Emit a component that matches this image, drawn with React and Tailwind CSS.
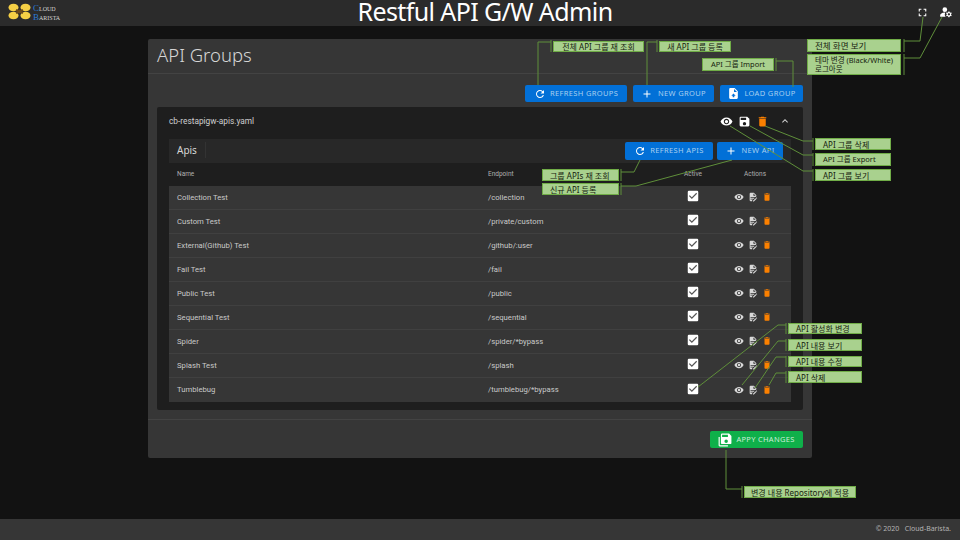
import { MdAdd, MdCheckBox, MdDelete, MdExpandLess, MdFullscreen, MdManageAccounts, MdRefresh, MdSave, MdVisibility } from "react-icons/md";

const apis = [
  ["Collection Test", "/collection"],
  ["Custom Test", "/private/custom"],
  ["External(Github) Test", "/github/:user"],
  ["Fail Test", "/fail"],
  ["Public Test", "/public"],
  ["Sequential Test", "/sequential"],
  ["Spider", "/spider/*bypass"],
  ["Splash Test", "/splash"],
  ["Tumblebug", "/tumblebug/*bypass"],
];

const notes = [
  { text: "전체 API 그룹 재 조회", className: "left-[553px] top-[41px] w-[91px] h-[11px] justify-center text-[8px]" },
  { text: "새 API 그룹 등록", className: "left-[659px] top-[41px] w-[72px] h-[11px] justify-center text-[8px]" },
  { text: "API 그룹 Import", className: "left-[702px] top-[58px] w-[72px] h-[13px] justify-center text-[7.5px]" },
  { text: "전체 화면 보기", className: "left-[807px] top-[39px] w-[94px] h-[13px] justify-start pl-[7px] text-[8.5px]" },
  { text: "테마 변경 (Black/White)\n로그아웃", className: "left-[807px] top-[54px] w-[94px] h-[21px] justify-start pl-[7px] text-[7.5px]" },
  { text: "API 그룹 삭제", className: "left-[815px] top-[138px] w-[76px] h-[12px] justify-start pl-[7px] text-[8px]" },
  { text: "API 그룹 Export", className: "left-[815px] top-[153px] w-[76px] h-[13px] justify-start pl-[7px] text-[7.5px]" },
  { text: "API 그룹 보기", className: "left-[815px] top-[169px] w-[76px] h-[12px] justify-start pl-[7px] text-[8px]" },
  { text: "그룹 APIs 재 조회", className: "left-[542px] top-[169px] w-[77px] h-[12px] justify-start pl-[7px] text-[8px]" },
  { text: "신규 API 등록", className: "left-[542px] top-[183px] w-[77px] h-[12px] justify-start pl-[7px] text-[8px]" },
  { text: "API 활성화 변경", className: "left-[788px] top-[323px] w-[74px] h-[11px] justify-start pl-[7px] text-[8px]" },
  { text: "API 내용 보기", className: "left-[788px] top-[339px] w-[74px] h-[12px] justify-start pl-[7px] text-[8px]" },
  { text: "API 내용 수정", className: "left-[788px] top-[356px] w-[74px] h-[11px] justify-start pl-[7px] text-[8px]" },
  { text: "API 삭제", className: "left-[788px] top-[371px] w-[74px] h-[12px] justify-start pl-[7px] text-[8px]" },
  { text: "변경 내용 Repository에 적용", className: "left-[744px] top-[486px] w-[112px] h-[12px] justify-center text-[8px]" },
];

const lines = [
  "538,85 538,42 551,42",
  "647,85 647,42 657,42",
  "776,61 793,61 793,87",
  "923,17 920,41 904,41",
  "942,17 920,58 904,58",
  "765,126 803,141 813,141",
  "750,126 803,155 813,155",
  "730,126 803,171 813,171",
  "640,160 634,172 621,172",
  "732,160 636,186 621,186",
  "698,387 778,325 786,325",
  "742,385 778,341 786,341",
  "755,388 776,357 786,357",
  "769,385 776,373 786,373",
  "726,450 726,489 742,489",
];

const ticks = [
  "551,40 551,52", "657,40 657,52", "776,58 776,71", "904,39 904,52", "904,54 904,75",
  "813,138 813,150", "813,153 813,166", "813,169 813,181", "621,169 621,181", "621,183 621,195",
  "786,323 786,334", "786,339 786,351", "786,356 786,367", "786,371 786,383", "742,486 742,498",
];

function FileEdit({ size = 10, className }) {
  return (
    <svg width={size} height={size} viewBox="0 0 24 24" fill="currentColor" className={className}>
      <path d="M6,2C4.89,2 4,2.89 4,4V20A2,2 0 0,0 6,22H10V20.09L12.09,18H6V16H14.09L16.09,14H6V12H18.09L20,10.09V8L14,2H6M13,3.5L18.5,9H13V3.5M20.15,13C20,13 19.86,13.05 19.75,13.16L18.73,14.18L20.82,16.26L21.84,15.25C22.05,15.03 22.05,14.67 21.84,14.46L20.54,13.16C20.43,13.05 20.29,13 20.15,13M18.14,14.77L12,20.92V23H14.08L20.23,16.85L18.14,14.77Z" />
    </svg>
  );
}

function FileUpload({ size = 13 }) {
  return (
    <svg width={size} height={size} viewBox="0 0 24 24" fill="currentColor">
      <path d="M14,2H6A2,2 0 0,0 4,4V20A2,2 0 0,0 6,22H18A2,2 0 0,0 20,20V8L14,2M13.5,16V19H10.5V16H8L12,12L16,16H13.5M13,9V3.5L18.5,9H13Z" />
    </svg>
  );
}

function SaveAll({ size = 14 }) {
  return (
    <svg width={size} height={size} viewBox="0 0 24 24" fill="currentColor">
      <path d="M17,7V3H7V7H17M14,17A3,3 0 0,0 17,14A3,3 0 0,0 14,11A3,3 0 0,0 11,14A3,3 0 0,0 14,17M19,1L23,5V17A2,2 0 0,1 21,19H7C5.89,19 5,18.1 5,17V3A2,2 0 0,1 7,1H19M1,7H3V21H17V23H3A2,2 0 0,1 1,21V7Z" />
    </svg>
  );
}

function Logo() {
  return (
    <svg width="23" height="17" viewBox="0 0 23 17">
      <ellipse cx="5.5" cy="4.5" rx="5" ry="3.8" fill="#f5cf45" />
      <ellipse cx="17.5" cy="4.5" rx="5" ry="3.8" fill="#f5cf45" />
      <ellipse cx="5.5" cy="12.5" rx="5" ry="3.8" fill="#f5cf45" />
      <ellipse cx="17.5" cy="12.5" rx="5" ry="3.8" fill="#f5cf45" />
      <path d="M8 7 L15 10 M15 7 L8 10" stroke="#6b4a1c" strokeWidth="2.4" />
      <circle cx="11.5" cy="8.5" r="2" fill="#6b4a1c" />
    </svg>
  );
}

function BlueButton({ icon, label, className }) {
  return (
    <div className={`flex items-center justify-center rounded-[2px] bg-[#0270d7] text-[#a8cfef] ${className}`}>
      <span className="text-white">{icon}</span>
      <span className="text-[7.5px] uppercase tracking-[0.35px] whitespace-nowrap">{label}</span>
    </div>
  );
}

function ApiRow({ name, endpoint }) {
  return (
    <div className="grid h-6 grid-cols-[311px_180px_66px_1fr] items-center border-b border-[#404040] bg-[#363636] font-['Roboto',sans-serif] text-[7.7px] text-[#c9c9c9] last:border-b-0">
      <div className="pl-2">{name}</div>
      <div className="pl-2">{endpoint}</div>
      <div className="flex justify-center pb-[3px]">
        <span className="relative flex h-[14px] w-[14px] items-center justify-center">
          <span className="absolute h-[8px] w-[8px] bg-[#555]" />
          <MdCheckBox size={14} className="relative text-white" />
        </span>
      </div>
      <div className="flex items-center justify-center gap-1 pb-[1px] pr-[11px]">
        <MdVisibility size={10} className="text-[#d8d8d8]" />
        <FileEdit className="text-[#d8d8d8]" />
        <MdDelete size={10} className="text-[#fb8000]" />
      </div>
    </div>
  );
}

export default function App() {
  return (
    <div className="relative flex h-[540px] w-[960px] flex-col overflow-hidden bg-[#121212] font-['Noto_Sans','Noto_Sans_CJK_KR',sans-serif]">
      <header className="relative flex h-[26px] shrink-0 items-center justify-center bg-[#2b2b2b] pl-[10px]">
        <div className="absolute left-2 top-[3px] flex items-start gap-[2px]">
          <Logo />
          <div className="pt-[1px] font-['Liberation_Serif',serif] text-[9px] leading-[9px] text-[#d5d5d5] [font-variant:small-caps]">
            <div><span className="text-[#2a7ad8]">C</span>loud</div>
            <div><span className="text-[#2a7ad8]">B</span>arista</div>
          </div>
        </div>
        <h1 className="pb-[3px] text-[25px] leading-[23px] tracking-[-0.6px] whitespace-nowrap text-white">Restful API G/W Admin</h1>
        <div className="absolute right-[7px] top-[5px] flex items-center gap-[10px] text-white">
          <MdFullscreen size={13} />
          <MdManageAccounts size={14} />
        </div>
      </header>

      <main className="flex-1">
        <section className="mx-auto mt-[13px] h-[419px] w-[664px] rounded-[2px] bg-[#363636]">
          <div className="flex h-[35px] items-center border-b border-[#434343] pb-[2px] pl-[9px] text-[18.5px] font-light text-[#d6d6d6]">
            API Groups
          </div>
          <div className="flex justify-end gap-[6px] pr-[9px] pt-[11px]">
            <BlueButton icon={<MdRefresh size={12} />} label="Refresh Groups" className="h-[17px] w-[102px] gap-[4px]" />
            <BlueButton icon={<MdAdd size={12} />} label="New Group" className="h-[17px] w-[81px] gap-[5px]" />
            <BlueButton icon={<FileUpload />} label="Load Group" className="h-[17px] w-[83px] gap-[4px]" />
          </div>

          <div className="mx-[9px] mt-[5px] h-[303px] rounded-[2px] bg-[#1e1e1e] px-3 pt-[1px]">
            <div className="flex h-[26px] items-center justify-between">
              <span className="font-['Roboto',sans-serif] text-[8.3px] text-[#cfcfcf]">cb-restapigw-apis.yaml</span>
              <div className="flex items-center gap-[5px] text-white">
                <MdVisibility size={13} />
                <MdSave size={13} />
                <MdDelete size={13} className="text-[#fb8000]" />
                <MdExpandLess size={12} className="ml-[5px] text-[#d0d0d0]" />
              </div>
            </div>

            <div className="mt-[5px] rounded-[2px] bg-[#1e1e1e]">
              <div className="flex h-6 items-center justify-between bg-[#282828] px-2">
                <span className="mb-[2px] border-r border-[#333] pr-2 text-[10px] leading-[16px] text-[#d6d6d6]">Apis</span>
                <div className="flex items-center gap-1">
                  <BlueButton icon={<MdRefresh size={12} />} label="Refresh APIs" className="h-[18px] w-[88px] gap-[4px]" />
                  <BlueButton icon={<MdAdd size={12} />} label="New API" className="h-[18px] w-[66px] gap-[4px]" />
                </div>
              </div>
              <div className="grid h-[23px] grid-cols-[311px_180px_66px_1fr] items-center font-['Roboto',sans-serif] text-[6.5px] text-[#b0b0b0]">
                <div className="pl-2">Name</div>
                <div className="pl-2">Endpoint</div>
                <div className="text-center">Active</div>
                <div className="pr-[7px] text-center">Actions</div>
              </div>
              {apis.map(([name, endpoint]) => (
                <ApiRow key={name} name={name} endpoint={endpoint} />
              ))}
            </div>
          </div>

          <div className="mt-[9px] flex justify-end border-t border-[#434343] pr-[9px] pt-[11px]">
            <div className="flex h-[17px] w-[93px] items-center justify-center gap-[4px] rounded-[2px] bg-[#0fb04a] text-[#cdeed8]">
              <span className="text-white"><SaveAll /></span>
              <span className="text-[7.5px] tracking-[0.3px] whitespace-nowrap">APPY CHANGES</span>
            </div>
          </div>
        </section>
      </main>

      <footer className="flex h-[21px] shrink-0 items-center justify-end bg-[#363636] pr-[9px] text-[7px] text-[#b4b4b4]">
        <span className="whitespace-pre">© 2020   Cloud-Barista.</span>
      </footer>

      {/* annotation callouts drawn over the screen */}
      <svg className="pointer-events-none absolute inset-0" width="960" height="540" fill="none" stroke="#5f8f3a" strokeWidth="1">
        {lines.map((p) => <polyline key={p} points={p} />)}
        {ticks.map((p) => <polyline key={p} points={p} />)}
      </svg>
      {notes.map((n) => (
        <div
          key={n.text}
          className={`absolute flex items-center whitespace-pre-line border border-[#70ad47] bg-[#a9d18e] leading-[9px] text-[#16220e] ${n.className}`}
        >
          {n.text}
        </div>
      ))}
    </div>
  );
}
